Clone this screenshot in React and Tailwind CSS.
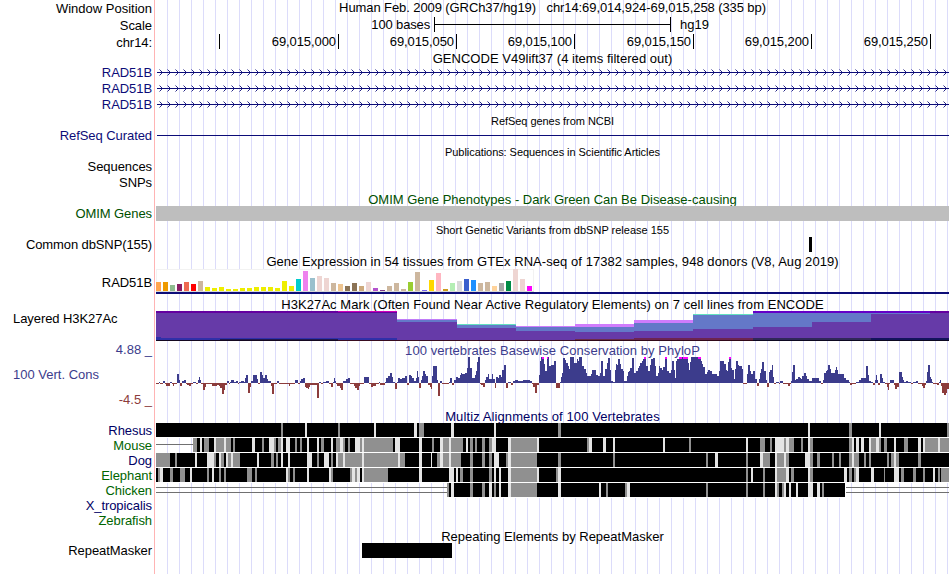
import React from 'react';

const PLOT_START = 156;
const PLOT_WIDTH = 793;

const TICKS = [
  { label: '', width: 'w-[64px]' },
  { label: '69,015,000', width: 'w-[119px]' },
  { label: '69,015,050', width: 'w-[118px]' },
  { label: '69,015,100', width: 'w-[118px]' },
  { label: '69,015,150', width: 'w-[119px]' },
  { label: '69,015,200', width: 'w-[118px]' },
  { label: '69,015,250', width: 'w-[119px]' },
];

// one entry per GTEx tissue: [colour, bar height]
const TISSUES = [
  ['#ffa54f', 9], ['#ee9a00', 9], ['#8fbc8f', 6], ['#8b1c62', 7], ['#ee6a50', 9], ['#ff0000', 7],
  ['#cdb79e', 10], ['#eeee00', 4], ['#eeee00', 3], ['#eeee00', 4], ['#eeee00', 2], ['#eeee00', 2],
  ['#eeee00', 3], ['#eeee00', 3], ['#eeee00', 4], ['#eeee00', 4], ['#eeee00', 4], ['#eeee00', 3],
  ['#eeee00', 10], ['#eeee00', 5], ['#00cdcd', 12], ['#ee82ee', 20], ['#9ac0cd', 13], ['#eed5d2', 15],
  ['#eed5d2', 13], ['#cdb79e', 8], ['#eec591', 7], ['#8b7355', 5], ['#8b7355', 8], ['#cdaa7d', 5],
  ['#eed5d2', 9], ['#b452cd', 3], ['#7a378b', 1], ['#cdb79e', 5], ['#cdb79e', 8], ['#cdb79e', 2],
  ['#9acd32', 9], ['#cdb79e', 19], ['#7a67ee', 1], ['#ffd700', 11], ['#ffb6c1', 18], ['#cd9b1d', 2],
  ['#b4eeb4', 8], ['#d9d9d9', 10], ['#3a5fcd', 12], ['#1e90ff', 11], ['#cdb79e', 8], ['#cdb79e', 9],
  ['#ffd39b', 5], ['#a6a6a6', 8], ['#008b45', 10], ['#eed5d2', 22], ['#eed5d2', 12], ['#ff00ff', 5],
];

// stacked signal, [x0, x1, y0, y1, colour]
const H3K27AC = [
  [156, 397, 0, 30, '#663aa8'], [156, 397, 0, 2, '#6400a0'], [338, 397, 0, 1, '#d000b8'],
  [397, 457, 8, 9, '#c07cf8'], [397, 457, 9, 11, '#6478c8'], [397, 457, 11, 30, '#663aa8'],
  [457, 516, 13, 14, '#64e0c0'], [457, 516, 14, 17, '#6478c8'], [457, 516, 17, 30, '#663aa8'],
  [516, 575, 15, 16, '#d07cfc'], [516, 575, 16, 20, '#6478c8'], [516, 575, 20, 30, '#663aa8'],
  [575, 634, 13, 16, '#d07cfc'], [575, 634, 16, 21, '#6478c8'], [575, 634, 21, 30, '#663aa8'],
  [634, 693, 9, 12, '#d07cfc'], [634, 693, 12, 20, '#6478c8'], [634, 693, 20, 30, '#663aa8'],
  [693, 753, 3, 4, '#64e0c0'], [693, 753, 4, 18, '#6478c8'], [693, 753, 18, 30, '#663aa8'],
  [753, 930, 0, 2, '#6400c8'], [753, 812, 2, 16, '#6478c8'], [753, 812, 16, 30, '#663aa8'],
  [812, 871, 2, 11, '#6478c8'], [812, 871, 11, 30, '#663aa8'],
  [871, 930, 2, 3, '#6478c8'], [871, 930, 3, 30, '#663aa8'],
  [930, 949, 0, 2, '#6400a0'], [930, 949, 2, 30, '#663aa8'],
  [156, 161, 26, 29, '#3030a8'], [161, 220, 27, 29, '#3030a8'], [220, 397, 27, 28, '#3030a8'], [220, 338, 28, 29, '#201850'],
  [338, 397, 28, 29, '#3030a8'], [575, 634, 28, 29, '#6c2c48'],
  [634, 753, 27, 29, '#6c2450'], [753, 871, 27, 29, '#302858'], [871, 949, 27, 29, '#14145c'],
  [156, 338, 29, 30, '#140820'], [338, 575, 29, 30, '#380c20'], [575, 753, 29, 30, '#300818'], [753, 949, 29, 30, '#0c0820'],
];

// conservation scores, "width:height" runs from each start position
const PHYLOP = [
  {
    start: 156,
    runs: '3:-1 1:1 3:-1 2:2 1:-1 4:-3 2:1 1:-1 1:-3 3:-1 2:9 1:3 2:-3 2:2 2:3 1:-1 2:-2 2:-3 2:-1 3:1 2:-1 1:3 1:6 1:3 2:-1 2:-7 1:-4 1:-1 5:-1 5:-3 2:-2 1:-3 2:-5 2:-11 1:-7 2:-2 2:2 1:-1 1:1 3:3 2:1 2:2 1:-1 2:1 3:2 1:1 1:5 2:8 2:-10 1:-4 2:2 4:8 1:4 2:-1 2:11 1:8 2:5 2:8 1:4 3:2 1:-3 2:-11 3:-1 2:2 10:-1 1:-3 5:-1 3:3 2:-1 1:2 2:4 2:5 1:-4 2:-5 1:-6 1:-4 7:-2 2:-15 2:1 2:-1 3:1 3:2 2:-1 2:-4 1:1 1:5 1:2 1:-1 3:-3 1:-5 2:-7 1:2 2:2 2:4 2:5 4:-1 1:-3 2:-5 2:-7 1:-3 4:-1 5:6 2:-1 2:-4 3:-3 3:-1 1:1 5:-2 1:1 2:5 2:7 2:10 1:6 2:1 2:-6 1:1 2:5 2:4 3:5 2:7 2:-2 2:8 1:7 2:5 2:2 1:5 1:12 1:6',
  },
  {
    start: 419,
    runs: '2:-5 1:3 1:7 2:12 1:9 2:7 2:-2 1:-4 1:-6 1:7 4:17 1:3 2:-13 2:2 7:-1 1:1 2:5 2:-2 2:3 2:6 2:5 1:8 1:10 3:9 2:10 1:15 2:26 2:15 3:5 1:8 1:12 1:21 2:26 1:-1 2:-2 2:-4 1:3 2:6 1:9 2:4 1:4 1:9 2:4 1:-5 2:6 1:5 2:8 1:6 2:13 2:18 2:-5 3:1 2:-2 2:2 3:3 5:2 7:3 2:2 1:-1 2:-4 2:-10 2:-2 1:8 1:22 3:26 1:19 1:12 1:12 2:26 2:17 3:18 2:22 4:-5 1:1 1:6 1:10 2:25 1:23 2:20 1:17 1:14 4:26 2:20 1:20 1:24 1:22 3:26 2:17 2:14 1:10 4:7 1:9 4:13 2:8 2:7 1:10 2:22 2:7 2:14 1:20 2:25 1:13 2:2 2:1 1:13 1:19 1:18 2:24 1:19 2:14 1:12 3:2 1:7 1:11 1:12 2:15 2:25 2:10 2:12 1:15 1:17 2:20 1:22 1:24 2:26 2:17 1:12 1:12 1:18 2:24 2:25 1:17 2:7 1:10 1:17 2:15 1:13 2:16 2:26 2:12 2:10 1:13',
  },
  {
    start: 672,
    runs: '2:22 1:13 1:5 1:22 2:24 9:26 1:20 1:13 1:21 10:26 1:22 1:19 2:16 2:9 1:11 2:13 2:12 5:9 2:7 1:12 4:22 2:19 1:13 1:12 1:21 2:26 1:15 2:13 1:4 1:14 2:22 1:18 3:17 1:14 4:-1 1:9 2:18 1:12 2:9 2:12 2:4 2:-3 1:4 1:10 1:14 2:21 2:12 1:3 2:-4 1:11 2:13 1:18 1:6 2:-1 3:1 1:-1 3:2 5:-1 2:-3 1:-1 1:2 1:11 2:18 1:3 2:4 2:6 1:5 1:4 2:7 2:10 1:7 2:4 3:2 7:5 2:2 2:-1 1:3 2:10 1:12 1:13 2:18 1:14 4:10 1:13 1:16 1:13 6:9 2:5 3:3 1:1 2:-2 4:-1 3:1 2:3 5:5 2:17 1:8 2:2 2:1 2:-2 1:3 1:8 1:3 2:-2 2:9 1:5 2:1 2:-1 1:-4 1:-7 1:-1 4:3 1:-2 2:-6 2:-4 3:11 1:6 1:3 2:1 2:2 3:1 2:-1 3:1 2:2 4:-1 1:-3 2:-5 1:-2 1:2 1:11 2:18 1:6 1:4 1:1 4:-1 2:-2 1:1 1:3 1:-3 2:-10 2:-12 1:-10 2:-6',
  },
];

// scores that run past the top of the scale
const CLIPPED = [[542, 544], [547, 548], [644, 646], [665, 667], [679, 682], [683, 688], [698, 701], [729, 731]];

// block = aligned range, gray / light = weaker identity inside it
const SPECIES = [
  {
    name: 'Rhesus',
    color: 'text-[#000064]',
    block: [156, 949],
    gray: '281-283 338-340 419-424 558-561 849-852 947-949',
    light: '305-307 374-376 414-417 451-454 494-496 808-810 879-881',
  },
  {
    name: 'Mouse',
    color: 'text-[#006400]',
    block: [193, 949],
    gaps: [[156, 193, 6]],
    gray: '193-197 204-209 216-224 226-231 233-235 262-264 274-276 278-281 295-297 300-302 321-324 336-340 343-345 348-350 360-362 364-393 432-434 443-449 451-463 470-473 475-477 482-485 489-492 511-537 587-589 689-691 760-765 770-772 784-786 789-794 801-803 810-813 849-852 871-876 879-881 884-887 904-908 925-938 940-949',
    light: '200-202 214-216 224-226 252-255 269-274 281-283 286-290 307-309 317-319 331-333 340-343 355-360 362-364 395-400 419-422 440-443 449-451 466-468 492-496 508-511 537-539 589-592 603-606 613-615 663-665 746-748 775-784 786-789 808-810 852-854 856-859 861-864 869-871 876-879 894-896 918-921 923-925 938-940',
  },
  {
    name: 'Dog',
    color: 'text-[#000064]',
    block: [156, 949],
    gray: '156-170 175-177 214-216 221-224 228-231 233-240 271-274 276-278 317-319 331-333 338-343 345-362 364-398 400-405 437-440 443-449 451-461 470-473 482-485 489-492 506-508 511-537 558-561 613-615 706-708 746-748 763-770 777-784 786-789 810-813 817-820 832-834 839-841 849-852 854-859 864-866 869-871 887-889 891-894 896-899 918-921',
    light: '195-197 207-214 219-221 226-228 231-233 257-259 281-283 288-290 307-312 324-329 336-338 343-345 362-364 398-400 419-422 431-432 440-443 449-451 494-499 508-511 715-718 760-763 775-777 784-786 805-810 852-854 894-896',
  },
  {
    name: 'Elephant',
    color: 'text-[#006400]',
    block: [156, 949],
    gray: '158-160 170-173 180-185 207-209 219-221 224-226 247-252 255-257 288-290 293-295 331-333 350-352 355-357 364-388 460-463 470-473 489-492 511-537 556-558 746-748 763-765 777-786 791-794 810-813 849-852 854-856 884-885 901-904 913-916 923-925 938-940 941-949',
    light: '160-163 190-192 212-214 286-288 307-309 329-331 352-355 357-360 362-364 419-422 449-454 456-458 494-496 499-501 508-511 537-539 558-561 751-753 775-777 786-789 808-810 844-847 856-859 871-874 894-899 933-935',
  },
  {
    name: 'Chicken',
    color: 'text-[#006400]',
    block: [447, 845],
    gaps: [[156, 447, 4], [156, 447, 9], [846, 949, 4], [846, 949, 9]],
    gray: '447-449 470-473 482-485 494-496 511-537 606-608 625-627 706-708 746-748 763-765 777-779 782-784 822-824',
    light: '451-454 489-492 499-501 508-511 558-561 599-601 627-630 775-777 784-786 789-791 796-798 808-813 817-820',
  },
  { name: 'X_tropicalis', color: 'text-[#000064]' },
  { name: 'Zebrafish', color: 'text-[#006400]' },
];

const parseRanges = (text) => text.split(' ').map((r) => r.split('-').map(Number));

const parseScores = ({ start, runs }) => {
  let x = start;
  return runs.split(' ').map((run) => {
    const [w, h] = run.split(':').map(Number);
    const bar = { x, w, h };
    x += w;
    return bar;
  });
};

const Track = ({
  label = '',
  height,
  color = 'text-black',
  align = 'items-center justify-end',
  tracking = 'tracking-[-0.07px]',
  children,
}) => (
  <div className={`flex shrink-0 ${height}`}>
    <div className="flex w-[156px] shrink-0 bg-white pr-px">
      <div className={`flex w-full border-r border-[#ffb4b4] pr-[2px] whitespace-pre ${align} ${color} ${tracking}`}>
        {label}
      </div>
    </div>
    <div className="w-[793px]">{children}</div>
  </div>
);

const Title = ({
  height,
  label,
  labelColor,
  size = 'text-[13px]',
  color = 'text-black',
  tracking = '',
  pad = 'pt-[2px]',
  children,
}) => (
  <Track height={height} label={label} color={labelColor} tracking="">
    <div className={`flex h-full items-center justify-center whitespace-pre ${pad} ${size} ${color} ${tracking}`}>
      {children}
    </div>
  </Track>
);

const Plot = ({ height, children }) => (
  <svg
    className="block"
    width={PLOT_WIDTH}
    height={height}
    viewBox={`${PLOT_START} 0 ${PLOT_WIDTH} ${height}`}
    shapeRendering="crispEdges"
  >
    {children}
  </svg>
);

const GeneTrack = () => {
  const arrows = Array.from({ length: 99 }, (_, i) => `M${159.5 + i * 8} 4.5l3 3l-3 3`).join('');
  return (
    <Track label="RAD51B" height="h-[16px]" color="text-[#0c0c78]" align="items-center justify-end pb-[2px]">
      <Plot height={16}>
        <rect x="157" y="7" width="792" height="1" fill="#0c0c78" />
        <path d={arrows} fill="none" stroke="#0c0c78" strokeWidth="0.9" shapeRendering="auto" />
      </Plot>
    </Track>
  );
};

const Alignment = ({ species }) => {
  const { name, color, block, gaps = [], gray, light } = species;
  return (
    <Track label={name} height="h-[15px]" color={color}>
      {block && (
        <Plot height={15}>
          {gaps.map(([x0, x1, y]) => (
            <rect key={`${x0}-${y}`} x={x0} y={y} width={x1 - x0} height="1" fill="#707070" />
          ))}
          <rect x={block[0]} y="0" width={block[1] - block[0]} height="15" fill="#fff" />
          <rect x={block[0]} y="0" width={block[1] - block[0]} height="14" fill="#000" />
          {parseRanges(gray).map(([x0, x1]) => (
            <rect key={x0} x={x0} y="0" width={x1 - x0} height="14" fill="#909090" />
          ))}
          {parseRanges(light).map(([x0, x1]) => (
            <rect key={x0} x={x0} y="0" width={x1 - x0} height="14" fill="#e4e4e4" />
          ))}
        </Plot>
      )}
    </Track>
  );
};

export default function App() {
  return (
    <div className="flex h-[574px] w-[950px] flex-col overflow-hidden bg-white bg-[repeating-linear-gradient(to_right,#dcdcfa_0px,#dcdcfa_1px,#ffffff_1px,#ffffff_12px)] bg-[position:11px_0px] font-['Liberation_Sans',Arial,sans-serif] text-[13px] leading-none">
      {/* Ruler */}
      <Track label="Window Position" height="h-[17px]" tracking="">
        <div className="flex h-[14px] items-center justify-center whitespace-pre tracking-[-0.09px]">
          {'Human Feb. 2009 (GRCh37/hg19)   chr14:69,014,924-69,015,258 (335 bp)'}
        </div>
      </Track>
      <Track label="Scale" height="h-[17px]">
        <div className="flex h-[15px] items-center">
          <span className="w-[278px] pr-[4px] text-right tracking-[-0.15px]">100 bases</span>
          <div className="flex h-full w-[237px] items-center border-x border-black">
            <div className="h-px w-full bg-black" />
          </div>
          <span className="ml-[9px]">hg19</span>
        </div>
      </Track>
      <Track label="chr14:" height="h-[16px]">
        <div className="flex h-[15px]">
          {TICKS.map((tick) => (
            <div key={tick.label} className={`flex items-center justify-end border-r border-black pr-[2px] tracking-[-0.08px] ${tick.width}`}>
              {tick.label}
            </div>
          ))}
        </div>
      </Track>

      {/* Genes */}
      <Title height="h-[15px]" tracking="tracking-[0.03px]">GENCODE V49lift37 (4 items filtered out)</Title>
      <GeneTrack />
      <GeneTrack />
      <GeneTrack />
      <Title height="h-[15px]" size="text-[11px]" tracking="tracking-[-0.05px]">RefSeq genes from NCBI</Title>
      <Track label="RefSeq Curated" height="h-[16px]" color="text-[#0c0c78]" align="items-center justify-end pb-[2px]">
        <Plot height={16}>
          <rect x="157" y="7" width="792" height="1" fill="#0c0c78" />
        </Plot>
      </Track>

      {/* Literature and variants */}
      <Title height="h-[15px]" size="text-[11px]" tracking="tracking-[-0.06px]">Publications: Sequences in Scientific Articles</Title>
      <Track label="Sequences" height="h-[16px]" align="items-center justify-end pb-[2px]" />
      <Track label="SNPs" height="h-[15px]" />
      <Title height="h-[16px]" color="text-[#005000]">OMIM Gene Phenotypes - Dark Green Can Be Disease-causing</Title>
      <Track label="OMIM Genes" height="h-[15px]" color="text-[#005000]">
        <div className="relative h-full bg-[#bebebe]" />
      </Track>
      <Title height="h-[16px]" size="text-[11px]">Short Genetic Variants from dbSNP release 155</Title>
      <Track label="Common dbSNP(155)" height="h-[15px]" tracking="tracking-[-0.11px]">
        <div className="ml-[653px] h-full w-[3px] bg-black" />
      </Track>

      {/* Expression */}
      <Title height="h-[17px]" tracking="tracking-[0.055px]">
        Gene Expression in 54 tissues from GTEx RNA-seq of 17382 samples, 948 donors (V8, Aug 2019)
      </Title>
      <Track label="RAD51B" height="h-[26px]">
        <Plot height={26}>
          <rect x="156" y="0" width="378" height="23" fill="#f2f2f2" />
          <rect x="157" y="1" width="376" height="21" fill="#fff" />
          {TISSUES.map(([color, h], i) => (
            <rect key={i} x={156 + i * 7} y={22 - h} width="5" height={h} fill={color} />
          ))}
          <rect x="156" y="22" width="378" height="1" fill="#d8d8d8" />
          <rect x="156" y="23" width="793" height="2" fill="#0c0c78" />
        </Plot>
      </Track>

      {/* Regulation */}
      <Title height="h-[16px]" tracking="tracking-[0.055px]">
        H3K27Ac Mark (Often Found Near Active Regulatory Elements) on 7 cell lines from ENCODE
      </Title>
      <Track label="Layered H3K27Ac" height="h-[30px]" align="items-start justify-start pl-[13px] pt-[1px]">
        <Plot height={30}>
          {H3K27AC.map(([x0, x1, y0, y1, color], i) => (
            <rect key={i} x={x0} y={y0} width={x1 - x0} height={y1 - y0} fill={color} />
          ))}
        </Plot>
      </Track>

      {/* Conservation */}
      <Title
        height="h-[16px]"
        label="4.88 _"
        labelColor="text-[#3c3c8c]"
        color="text-[#3c3c8c]"
        tracking="tracking-[0.06px]"
      >
        100 vertebrates Basewise Conservation by PhyloP
      </Title>
      <Track
        height="h-[52px]"
        align="flex-col justify-between pt-[11px] pb-[3px]"
        tracking=""
        label={
          <>
            <span className="pl-[13px] text-[#3c3c8c]">100 Vert. Cons</span>
            <span className="text-right text-[#8c3c3c]">-4.5 _</span>
          </>
        }
      >
        <Plot height={52}>
          {PHYLOP.flatMap(parseScores).map(({ x, w, h }) => (
            <rect
              key={x}
              x={x}
              y={h > 0 ? 26 - h : 26}
              width={w}
              height={Math.abs(h)}
              fill={h > 0 ? '#3c3c8c' : '#8c3c3c'}
            />
          ))}
          {CLIPPED.map(([x0, x1]) => (
            <rect key={x0} x={x0} y="0" width={x1 - x0} height="2" fill="#ff00ff" />
          ))}
        </Plot>
      </Track>

      {/* Alignments */}
      <Title height="h-[14px]" color="text-[#000064]" tracking="tracking-[0.1px]" pad="pt-0">
        Multiz Alignments of 100 Vertebrates
      </Title>
      {SPECIES.map((species) => (
        <Alignment key={species.name} species={species} />
      ))}

      {/* Repeats */}
      <Title height="h-[15px]">Repeating Elements by RepeatMasker</Title>
      <Track label="RepeatMasker" height="h-[15px]">
        <div className="ml-[206px] h-full w-[90px] bg-black" />
      </Track>
      <Track height="h-[16px]" />
    </div>
  );
}
